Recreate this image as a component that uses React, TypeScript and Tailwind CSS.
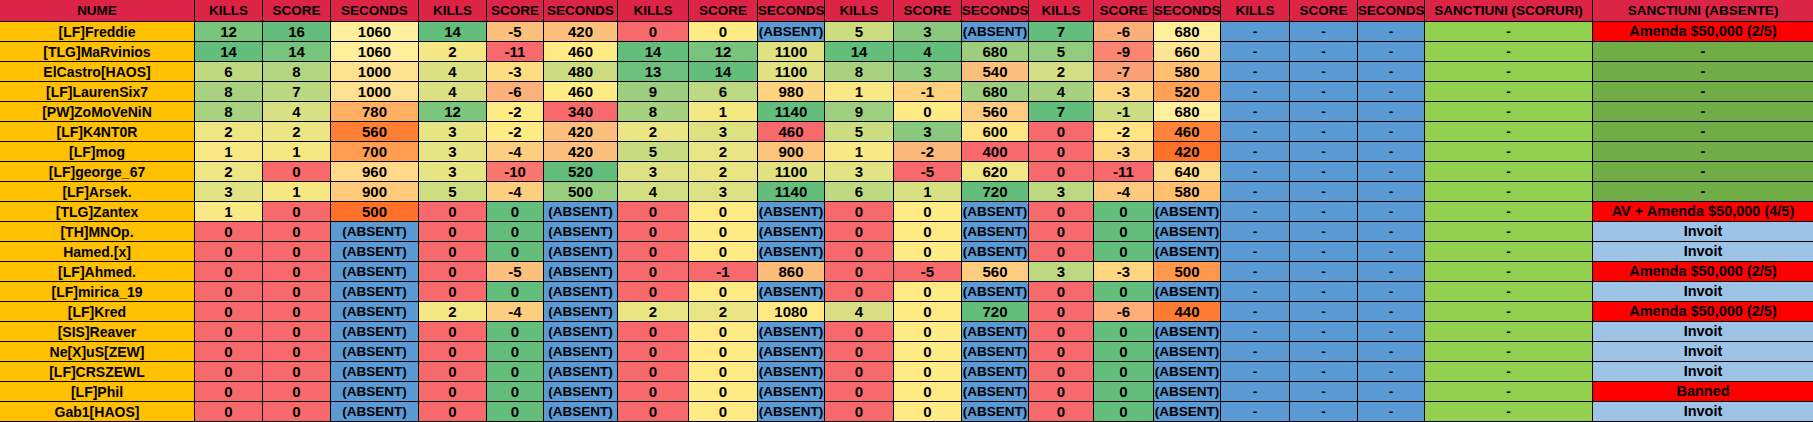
type Round = [number, number, number | null];

type Player = {
  name: string;
  rounds: Round[];
  sanction: string;
};

const ABS = null;
const zeroRounds: Round[] = [
  [0, 0, ABS],
  [0, 0, ABS],
  [0, 0, ABS],
  [0, 0, ABS],
  [0, 0, ABS],
];

const players: Player[] = [
  { name: '[LF]Freddie', rounds: [[12, 16, 1060], [14, -5, 420], [0, 0, ABS], [5, 3, ABS], [7, -6, 680]], sanction: 'Amenda $50,000 (2/5)' },
  { name: '[TLG]MaRvinios', rounds: [[14, 14, 1060], [2, -11, 460], [14, 12, 1100], [14, 4, 680], [5, -9, 660]], sanction: '-' },
  { name: 'ElCastro[HAOS]', rounds: [[6, 8, 1000], [4, -3, 480], [13, 14, 1100], [8, 3, 540], [2, -7, 580]], sanction: '-' },
  { name: '[LF]LaurenSix7', rounds: [[8, 7, 1000], [4, -6, 460], [9, 6, 980], [1, -1, 680], [4, -3, 520]], sanction: '-' },
  { name: '[PW]ZoMoVeNiN', rounds: [[8, 4, 780], [12, -2, 340], [8, 1, 1140], [9, 0, 560], [7, -1, 680]], sanction: '-' },
  { name: '[LF]K4NT0R', rounds: [[2, 2, 560], [3, -2, 420], [2, 3, 460], [5, 3, 600], [0, -2, 460]], sanction: '-' },
  { name: '[LF]mog', rounds: [[1, 1, 700], [3, -4, 420], [5, 2, 900], [1, -2, 400], [0, -3, 420]], sanction: '-' },
  { name: '[LF]george_67', rounds: [[2, 0, 960], [3, -10, 520], [3, 2, 1100], [3, -5, 620], [0, -11, 640]], sanction: '-' },
  { name: '[LF]Arsek.', rounds: [[3, 1, 900], [5, -4, 500], [4, 3, 1140], [6, 1, 720], [3, -4, 580]], sanction: '-' },
  { name: '[TLG]Zantex', rounds: [[1, 0, 500], [0, 0, ABS], [0, 0, ABS], [0, 0, ABS], [0, 0, ABS]], sanction: 'AV + Amenda $50,000 (4/5)' },
  { name: '[TH]MNOp.', rounds: zeroRounds, sanction: 'Invoit' },
  { name: 'Hamed.[x]', rounds: zeroRounds, sanction: 'Invoit' },
  { name: '[LF]Ahmed.', rounds: [[0, 0, ABS], [0, -5, ABS], [0, -1, 860], [0, -5, 560], [3, -3, 500]], sanction: 'Amenda $50,000 (2/5)' },
  { name: '[LF]mirica_19', rounds: zeroRounds, sanction: 'Invoit' },
  { name: '[LF]Kred', rounds: [[0, 0, ABS], [2, -4, ABS], [2, 2, 1080], [4, 0, 720], [0, -6, 440]], sanction: 'Amenda $50,000 (2/5)' },
  { name: '[SIS]Reaver', rounds: zeroRounds, sanction: 'Invoit' },
  { name: 'Ne[X]uS[ZEW]', rounds: zeroRounds, sanction: 'Invoit' },
  { name: '[LF]CRSZEWL', rounds: zeroRounds, sanction: 'Invoit' },
  { name: '[LF]Phil', rounds: zeroRounds, sanction: 'Banned' },
  { name: 'Gab1[HAOS]', rounds: zeroRounds, sanction: 'Invoit' },
];

type RGB = [number, number, number];
const RED: RGB = [248, 105, 107];
const YELLOW: RGB = [255, 235, 132];
const GREEN: RGB = [99, 190, 123];
const ORANGE: RGB = [255, 113, 40];
const PALE: RGB = [255, 239, 156];

const mix = (a: RGB, b: RGB, t: number) => {
  const c = a.map((v, i) => Math.round(v + (b[i] - v) * t));
  return `rgb(${c[0]}, ${c[1]}, ${c[2]})`;
};

// Excel style colour scales, one per column
const scaleFor = (values: number[], twoColor: boolean) => {
  const sorted = [...values].sort((a, b) => a - b);
  const min = sorted[0];
  const max = sorted[sorted.length - 1];
  if (twoColor) {
    return (v: number) => mix(ORANGE, PALE, max === min ? 0 : (v - min) / (max - min));
  }
  const pos = (sorted.length - 1) * 0.5;
  const lo = Math.floor(pos);
  const hi = Math.ceil(pos);
  const mid = sorted[lo] + (sorted[hi] - sorted[lo]) * (pos - lo);
  return (v: number) => {
    if (v <= mid) return mix(RED, YELLOW, mid === min ? 0 : (v - min) / (mid - min));
    return mix(YELLOW, GREEN, (v - mid) / (max - mid));
  };
};

const scales = [0, 1, 2, 3, 4].map((r) =>
  [0, 1, 2].map((c) => {
    const vals = players
      .map((p) => p.rounds[r][c])
      .filter((v): v is number => v !== null);
    return scaleFor(vals, c === 2 && (r === 0 || r === 4));
  })
);

const cell = 'flex items-center justify-center overflow-hidden whitespace-nowrap';
const headers = ['KILLS', 'SCORE', 'SECONDS'];

export default function App() {
  return (
    <div className="w-[1813px] h-[422px] bg-black font-['Liberation_Sans',Arial,sans-serif] text-[13.5px] font-bold leading-none text-black">
      <div className="grid grid-cols-[194px_67px_67px_87px_67px_56px_73px_70px_68px_66px_68px_67px_66px_64px_59px_66px_68px_67px_66px_167px_220px] grid-rows-[21px_repeat(20,19px)] gap-px pb-px">
        {/* Header */}
        <div className={`${cell} bg-[#dc2447]`}>NUME</div>
        {Array.from({ length: 6 }).flatMap((_, r) =>
          headers.map((h) => (
            <div key={`h${r}${h}`} className={`${cell} bg-[#dc2447]`}>
              {h}
            </div>
          ))
        )}
        <div className={`${cell} bg-[#dc2447]`}>SANCTIUNI (SCORURI)</div>
        <div className={`${cell} bg-[#dc2447]`}>SANCTIUNI (ABSENTE)</div>

        {/* Rows */}
        {players.flatMap((p, i) => [
          <div key={`n${i}`} className={`${cell} bg-[#ffc000] text-[14px]`}>
            {p.name}
          </div>,
          ...p.rounds.flatMap((round, r) =>
            round.map((v, c) =>
              v === null ? (
                <div key={`c${i}-${r}-${c}`} className={`${cell} bg-[#5b9bd5]`}>
                  (ABSENT)
                </div>
              ) : (
                <div
                  key={`c${i}-${r}-${c}`}
                  className={`${cell} text-[15px]`}
                  style={{ backgroundColor: scales[r][c](v) }}
                >
                  {v}
                </div>
              )
            )
          ),
          ...[0, 1, 2].map((c) => (
            <div key={`e${i}-${c}`} className={`${cell} bg-[#5b9bd5]`}>
              -
            </div>
          )),
          <div key={`s${i}`} className={`${cell} bg-[#92d050]`}>
            -
          </div>,
          <div
            key={`a${i}`}
            className={`${cell} text-[14.5px] ${
              p.sanction === '-'
                ? 'bg-[#70ad47]'
                : p.sanction === 'Invoit'
                ? 'bg-[#9dc3e6]'
                : 'bg-[#ff0000]'
            }`}
          >
            {p.sanction}
          </div>,
        ])}
      </div>
    </div>
  );
}
